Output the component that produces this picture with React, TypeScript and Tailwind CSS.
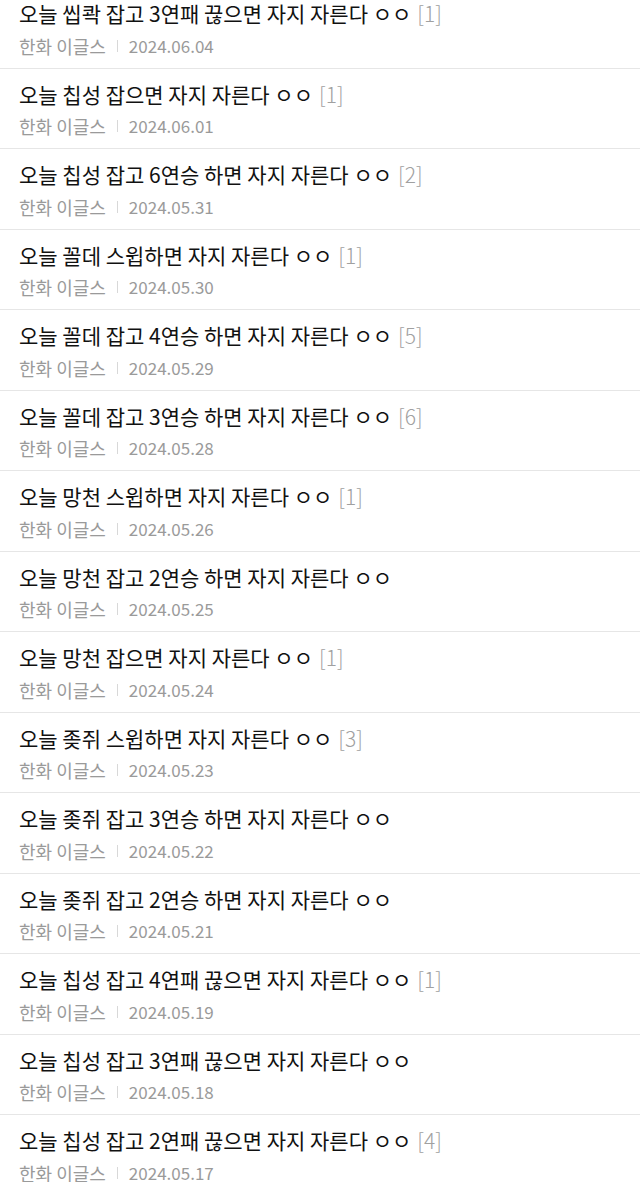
const posts = [
  { title: '오늘 씹콱 잡고 3연패 끊으면 자지 자른다 ㅇㅇ', count: 1, date: '2024.06.04' },
  { title: '오늘 칩성 잡으면 자지 자른다 ㅇㅇ', count: 1, date: '2024.06.01' },
  { title: '오늘 칩성 잡고 6연승 하면 자지 자른다 ㅇㅇ', count: 2, date: '2024.05.31' },
  { title: '오늘 꼴데 스윕하면 자지 자른다 ㅇㅇ', count: 1, date: '2024.05.30' },
  { title: '오늘 꼴데 잡고 4연승 하면 자지 자른다 ㅇㅇ', count: 5, date: '2024.05.29' },
  { title: '오늘 꼴데 잡고 3연승 하면 자지 자른다 ㅇㅇ', count: 6, date: '2024.05.28' },
  { title: '오늘 망천 스윕하면 자지 자른다 ㅇㅇ', count: 1, date: '2024.05.26' },
  { title: '오늘 망천 잡고 2연승 하면 자지 자른다 ㅇㅇ', count: 0, date: '2024.05.25' },
  { title: '오늘 망천 잡으면 자지 자른다 ㅇㅇ', count: 1, date: '2024.05.24' },
  { title: '오늘 좆쥐 스윕하면 자지 자른다 ㅇㅇ', count: 3, date: '2024.05.23' },
  { title: '오늘 좆쥐 잡고 3연승 하면 자지 자른다 ㅇㅇ', count: 0, date: '2024.05.22' },
  { title: '오늘 좆쥐 잡고 2연승 하면 자지 자른다 ㅇㅇ', count: 0, date: '2024.05.21' },
  { title: '오늘 칩성 잡고 4연패 끊으면 자지 자른다 ㅇㅇ', count: 1, date: '2024.05.19' },
  { title: '오늘 칩성 잡고 3연패 끊으면 자지 자른다 ㅇㅇ', count: 0, date: '2024.05.18' },
  { title: '오늘 칩성 잡고 2연패 끊으면 자지 자른다 ㅇㅇ', count: 4, date: '2024.05.17' },
];

const App = () => {
  return (
    <div
      className="min-h-screen bg-white overflow-hidden"
      style={{ fontFamily: '"Noto Sans CJK KR", "Noto Sans", sans-serif' }}
    >
      <ul className="mt-[-12px]">
        {posts.map((post) => (
          <li
            key={post.date}
            className="h-[80.5px] border-b border-[#e6e6e6] px-[19px] pt-[11px]"
          >
            <p className="text-[21px] leading-[28px] text-[#111] whitespace-nowrap">
              {post.title}
              {post.count > 0 && (
                <span className="ml-[6px] font-light text-[#a0a0a0]">[{post.count}]</span>
              )}
            </p>
            <div className="mt-[6.5px] flex items-center leading-[24px] text-[#9a9a9a]">
              <span className="text-[18px]">한화 이글스</span>
              <span className="mx-[11px] h-[12px] w-px bg-[#d8d8d8]"></span>
              <span className="text-[17px]">{post.date}</span>
            </div>
          </li>
        ))}
      </ul>
    </div>
  );
};

export default App;
